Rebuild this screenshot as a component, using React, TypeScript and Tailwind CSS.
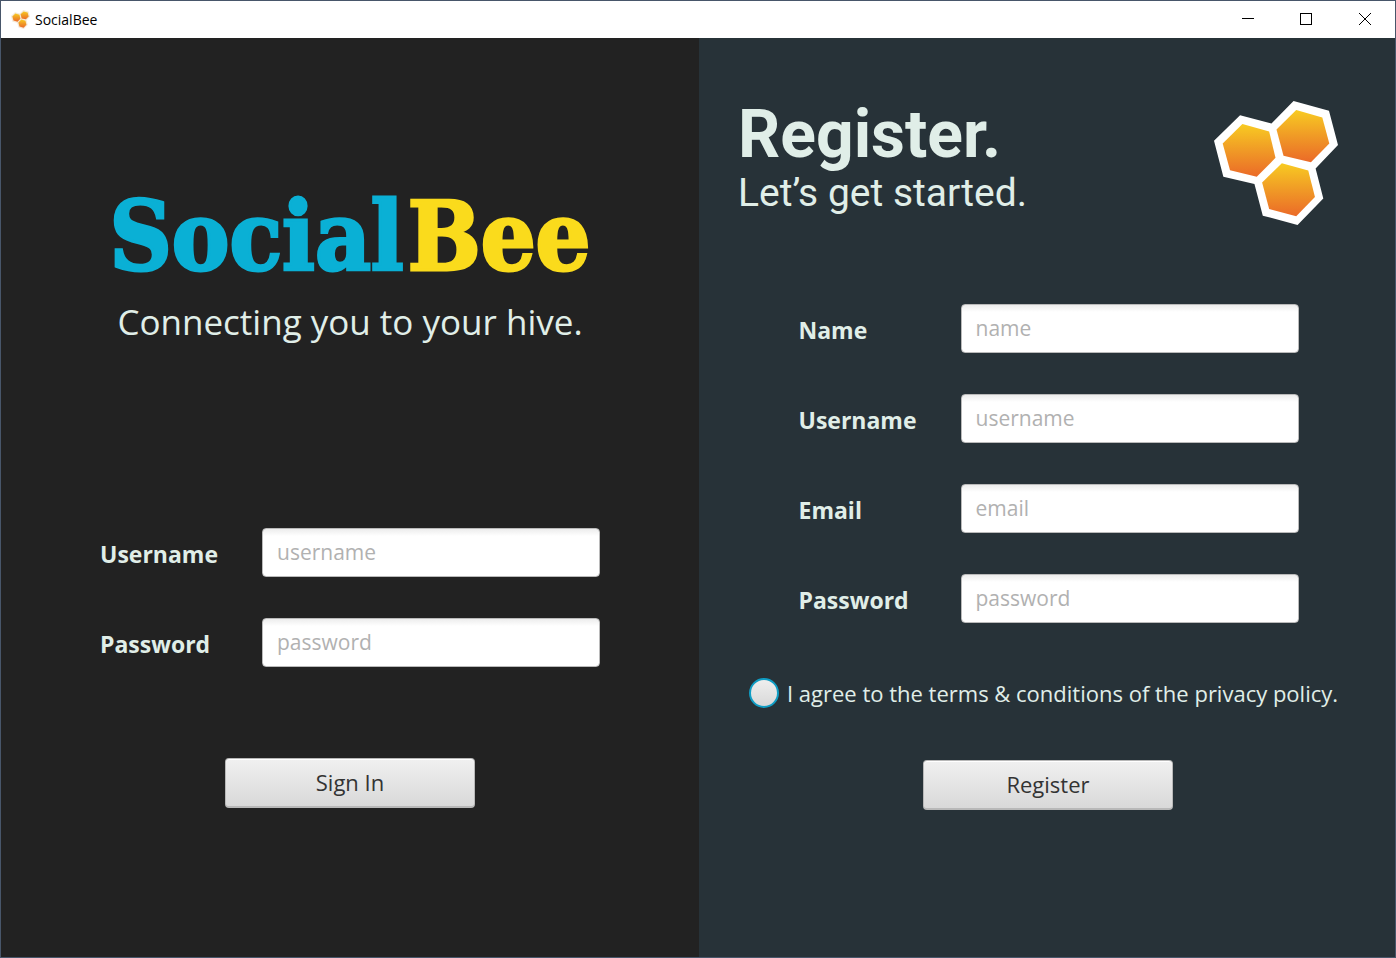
import { useId, type ReactNode } from "react";

const cells = [
  "127,102 207,124 226,203 170,260 90,240 68,160",
  "288,60 366,82 387,160 332,216 250,197 229,118",
  "245,219 324,241 344,320 288,378 207,356 186,277",
];

function Honeycomb({ className, outline = "#ffffff" }: { className: string; outline?: string }) {
  const id = useId();
  return (
    <svg viewBox="42 33 371 371" className={className} aria-hidden="true">
      <defs>
        <linearGradient id={id} x1="0" y1="0" x2="0" y2="1">
          <stop offset="0" stopColor="#f8cb22" />
          <stop offset="0.5" stopColor="#f09a26" />
          <stop offset="1" stopColor="#eb6a28" />
        </linearGradient>
      </defs>
      <polygon
        fill={outline}
        points="42,152 120,76 214,100 280,33 386,62 413,165 346,235 369,325 292,404 188,376 163,281 70,260"
      />
      {cells.map((points) => (
        <polygon key={points} points={points} fill={`url(#${id})`} />
      ))}
    </svg>
  );
}

function Field({ id, label, placeholder, type = "text" }: { id: string; label: string; placeholder: string; type?: string }) {
  return (
    <div className="flex items-center">
      <label htmlFor={id} className="w-[162px] shrink-0 pt-0.5 text-[23px] leading-8 font-bold text-[#e0eee8]">
        {label}
      </label>
      <input
        id={id}
        type={type}
        placeholder={placeholder}
        className="h-[49px] min-w-0 flex-1 rounded-[4px] border border-[#bababa] bg-linear-to-b from-[#ededed] via-white via-15% to-white px-3.5 pb-0.5 text-[21px] text-[#333333] outline-none placeholder:text-[#b1b1b1]"
      />
    </div>
  );
}

function PushButton({ children }: { children: ReactNode }) {
  return (
    <button
      type="submit"
      className="h-[50px] w-[250px] rounded-[4px] border border-b-2 border-[#b8b8b8] bg-linear-to-b from-[#f0f0f0] to-[#d9d9d9] text-[22px] text-[#333333] shadow-[inset_0_1px_0_#ffffff]"
    >
      {children}
    </button>
  );
}

function TitleBar() {
  return (
    <header className="flex h-[37px] shrink-0 items-center bg-white pl-2.5 text-black">
      <Honeycomb className="size-[19px]" outline="#f5e9d8" />
      <span className="ml-[5px] text-sm">SocialBee</span>
      <div className="ml-auto flex h-full">
        <button type="button" aria-label="Minimize" className="flex w-[58px] items-center justify-center">
          <svg width="12" height="12" viewBox="0 0 12 12" aria-hidden="true">
            <path d="M0 4.5H12" stroke="currentColor" />
          </svg>
        </button>
        <button type="button" aria-label="Maximize" className="flex w-[58px] items-center justify-center pb-0.5">
          <svg width="12" height="12" viewBox="0 0 12 12" aria-hidden="true">
            <rect x="0.5" y="0.5" width="11" height="11" fill="none" stroke="currentColor" />
          </svg>
        </button>
        <button type="button" aria-label="Close" className="flex w-[60px] items-center justify-center pb-0.5">
          <svg width="12" height="12" viewBox="0 0 12 12" aria-hidden="true">
            <path d="M0 0L12 12M12 0L0 12" stroke="currentColor" />
          </svg>
        </button>
      </div>
    </header>
  );
}

export default function App() {
  return (
    <div className="flex min-h-screen flex-col border border-[#48566a] font-['Open_Sans','Noto_Sans',sans-serif]">
      <TitleBar />
      <main className="grid flex-1 grid-cols-[698fr_696fr]">
        <section className="flex flex-col items-center bg-[#222222] pt-[143px]">
          <h1 className="font-['DejaVu_Serif_Condensed','DejaVu_Serif',serif] text-8xl leading-[112px] font-bold text-[#0ab0d5] [-webkit-text-stroke:3px_currentColor]">
            Social<span className="ml-1 text-[#fadb1c]">Bee</span>
          </h1>
          <p className="mt-1 text-[35px] leading-[50px] text-[#e0eee8]">Connecting you to your hive.</p>
          <form className="mt-[181px] flex w-[500px] flex-col gap-[41px]" onSubmit={(e) => e.preventDefault()}>
            <Field id="login-username" label="Username" placeholder="username" />
            <Field id="login-password" label="Password" placeholder="password" type="password" />
            <div className="mt-[50px] flex justify-center">
              <PushButton>Sign In</PushButton>
            </div>
          </form>
        </section>

        <section className="flex flex-col bg-[#273238] pt-[63px]">
          <div className="flex items-start justify-between pr-[57px] pl-[39px]">
            <div className="font-['Roboto',sans-serif] text-[#e0eee8]">
              <h2 className="text-[66px] leading-[68px] font-bold">Register.</h2>
              <p className="text-[39px] leading-[48px]">Let’s get started.</p>
            </div>
            <Honeycomb className="size-[124px]" />
          </div>
          <form className="mt-[79px] flex flex-col items-center pl-[3px]" onSubmit={(e) => e.preventDefault()}>
            <div className="flex w-[500px] flex-col gap-[41px]">
              <Field id="register-name" label="Name" placeholder="name" />
              <Field id="register-username" label="Username" placeholder="username" />
              <Field id="register-email" label="Email" placeholder="email" type="email" />
              <Field id="register-password" label="Password" placeholder="password" type="password" />
            </div>
            <label className="mt-[54px] mr-2.5 flex items-center gap-2 text-[22px] leading-8 text-[#e0eee8]">
              <input
                type="radio"
                name="terms"
                className="size-[30px] appearance-none rounded-full border-2 border-[#0f9dc4] bg-linear-to-b from-[#eeeeee] to-[#d9d9d9] checked:bg-[#0f9dc4]"
              />
              I agree to the terms &amp; conditions of the privacy policy.
            </label>
            <div className="mt-[51px] pr-px">
              <PushButton>Register</PushButton>
            </div>
          </form>
        </section>
      </main>
    </div>
  );
}
